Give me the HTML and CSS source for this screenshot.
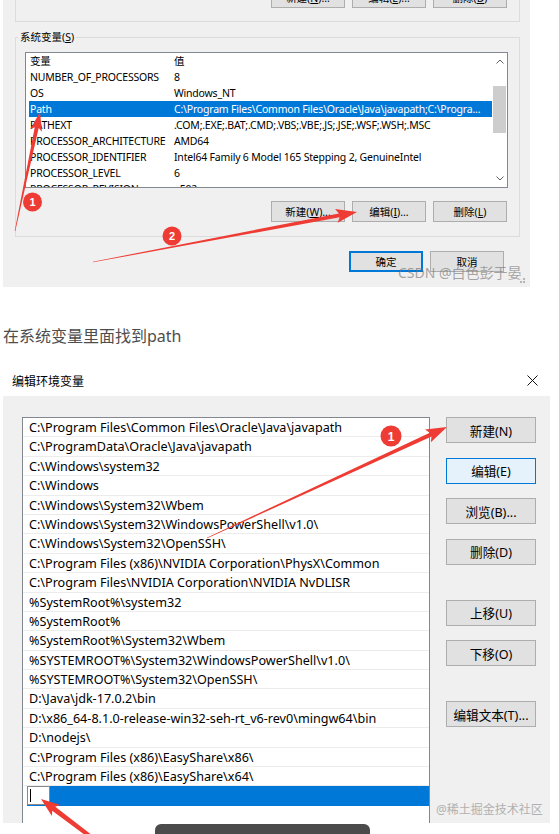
FILE: index.html
```html
<!DOCTYPE html>
<html lang="zh-CN">
<head>
    <meta charset="UTF-8">
    <meta name="viewport" content="width=device-width, initial-scale=1.0">
    <title>在系统变量里面找到path</title>
    <link rel="stylesheet" href="styles.css">
</head>
<body>
<div class="page">
    <!-- screenshot 1: system variables -->
    <section class="shot shot-sys">
        <div class="user-group">
            <div class="btn-row">
                <span class="btn">新建(<u>N</u>)...</span>
                <span class="btn">编辑(<u>E</u>)...</span>
                <span class="btn">删除(<u>D</u>)</span>
            </div>
        </div>
        <fieldset class="sys-group">
            <legend>系统变量(<u>S</u>)</legend>
            <div class="listview">
                <div class="lv-body">
                    <div class="lv-row"><span>变量</span><span>值</span></div>
                    <div class="lv-row"><span>NUMBER_OF_PROCESSORS</span><span>8</span></div>
                    <div class="lv-row"><span>OS</span><span>Windows_NT</span></div>
                    <div class="lv-row sel"><span>Path</span><span>C:\Program Files\Common Files\Oracle\Java\javapath;C:\Progra...</span></div>
                    <div class="lv-row"><span>PATHEXT</span><span>.COM;.EXE;.BAT;.CMD;.VBS;.VBE;.JS;.JSE;.WSF;.WSH;.MSC</span></div>
                    <div class="lv-row"><span>PROCESSOR_ARCHITECTURE</span><span>AMD64</span></div>
                    <div class="lv-row"><span>PROCESSOR_IDENTIFIER</span><span>Intel64 Family 6 Model 165 Stepping 2, GenuineIntel</span></div>
                    <div class="lv-row"><span>PROCESSOR_LEVEL</span><span>6</span></div>
                    <div class="lv-row"><span>PROCESSOR_REVISION</span><span>a502</span></div>
                </div>
                <div class="vscroll">
                    <div class="sb-arrow"><svg width="8" height="5" viewBox="0 0 8 5"><polyline points="0.5,4.5 4,1 7.5,4.5" fill="none" stroke="#606060" stroke-width="1"/></svg></div>
                    <div class="sb-track"><div class="sb-thumb"></div></div>
                    <div class="sb-arrow"><svg width="8" height="5" viewBox="0 0 8 5"><polyline points="0.5,0.5 4,4 7.5,0.5" fill="none" stroke="#606060" stroke-width="1"/></svg></div>
                </div>
            </div>
            <div class="btn-row group-btns">
                <span class="btn">新建(<u>W</u>)...</span>
                <span class="btn">编辑(<u>I</u>)...</span>
                <span class="btn">删除(<u>L</u>)</span>
            </div>
        </fieldset>
        <div class="btn-row dlg-foot">
            <span class="btn btn-default">确定</span>
            <span class="btn">取消</span>
        </div>
    </section>

    <p class="caption">在系统变量里面找到path</p>

    <!-- screenshot 2: edit environment variable -->
    <section class="shot shot-edit">
        <div class="titlebar">
            <span>编辑环境变量</span>
            <svg width="11" height="11" viewBox="0 0 11 11"><path d="M0.5 0.5 L10.5 10.5 M10.5 0.5 L0.5 10.5" stroke="#111" stroke-width="1"/></svg>
        </div>
        <div class="edit-body">
            <div class="pathlist">
                <div class="path-row">C:\Program Files\Common Files\Oracle\Java\javapath</div>
                <div class="path-row">C:\ProgramData\Oracle\Java\javapath</div>
                <div class="path-row">C:\Windows\system32</div>
                <div class="path-row">C:\Windows</div>
                <div class="path-row">C:\Windows\System32\Wbem</div>
                <div class="path-row">C:\Windows\System32\WindowsPowerShell\v1.0\</div>
                <div class="path-row">C:\Windows\System32\OpenSSH\</div>
                <div class="path-row">C:\Program Files (x86)\NVIDIA Corporation\PhysX\Common</div>
                <div class="path-row">C:\Program Files\NVIDIA Corporation\NVIDIA NvDLISR</div>
                <div class="path-row">%SystemRoot%\system32</div>
                <div class="path-row">%SystemRoot%</div>
                <div class="path-row">%SystemRoot%\System32\Wbem</div>
                <div class="path-row">%SYSTEMROOT%\System32\WindowsPowerShell\v1.0\</div>
                <div class="path-row">%SYSTEMROOT%\System32\OpenSSH\</div>
                <div class="path-row">D:\Java\jdk-17.0.2\bin</div>
                <div class="path-row">D:\x86_64-8.1.0-release-win32-seh-rt_v6-rev0\mingw64\bin</div>
                <div class="path-row">D:\nodejs\</div>
                <div class="path-row">C:\Program Files (x86)\EasyShare\x86\</div>
                <div class="path-row">C:\Program Files (x86)\EasyShare\x64\</div>
                <div class="path-row sel"><span class="edit-cell"><span class="caret"></span></span></div>
                <div class="path-row"></div>
            </div>
            <div class="side-btns">
                <span class="side-btn">新建(N)</span>
                <span class="side-btn focus">编辑(E)</span>
                <span class="side-btn">浏览(B)...</span>
                <span class="side-btn">删除(D)</span>
                <span class="side-btn gap-lg">上移(U)</span>
                <span class="side-btn">下移(O)</span>
                <span class="side-btn gap-lg">编辑文本(T)...</span>
            </div>
        </div>
    </section>

    <!-- annotations drawn on top of the screenshots -->
    <svg class="marks" width="559" height="834" viewBox="0 0 559 834">
        <g fill="#ee3b33">
            <polygon points="14.7,230.9 34.75,127.25 30.22,129.37 40,112 41.96,131.83 38.67,128.07 15.3,231.1"/>
            <polygon points="92.94,261.71 338.94,213.38 335.07,209.03 357,212 337.67,222.79 339.68,217.32 93.06,262.29"/>
            <polygon points="206.83,537.64 429.82,432.74 425,429.47 447,427 430.88,442.17 431.5,436.38 207.17,538.36"/>
            <polygon points="96.21,838.41 55.25,806.69 60.36,804.91 41,799 51.9,816.07 52.23,810.67 93.79,841.59"/>
            <circle cx="32.5" cy="202" r="9.5"/>
            <circle cx="172" cy="236" r="9.5"/>
            <circle cx="391" cy="436" r="10.5"/>
        </g>
        <g fill="#fff" font-family="Liberation Sans, sans-serif" font-weight="bold" text-anchor="middle">
            <text x="32.5" y="206" font-size="11">1</text>
            <text x="172" y="240" font-size="11">2</text>
            <text x="391" y="440.5" font-size="12">1</text>
        </g>
        <g fill="#b5b5b5">
            <rect x="523" y="278" width="2" height="2"/>
            <rect x="520" y="281" width="2" height="2"/>
            <rect x="523" y="281" width="2" height="2"/>
        </g>
    </svg>
    <div class="wm wm-csdn">CSDN @白色彭于晏</div>
    <div class="wm wm-juejin">@稀土掘金技术社区</div>
    <div class="toast-bar"></div>
</div>
</body>
</html>
```

FILE: styles.css
```css
body {
    margin: 0;
    background-color: #fff;
    font-family: "Noto Sans", "Noto Sans CJK SC", sans-serif;
    color: #000;
}

.page {
    position: relative;
    width: 559px;
    height: 834px;
    overflow: hidden;
}

.shot {
    margin-left: 3px;
    background-color: #f0f0f0;
    overflow: hidden;
}

/* ---- first screenshot ---- */

.shot-sys {
    width: 527px;
    height: 287px;
    font-size: 10.5px;
}

.user-group {
    height: 22px;
    margin: 0 10px 0 12px;
    padding-right: 12px;
    border: 1px solid #dcdcdc;
    border-top: none;
    box-sizing: border-box;
    display: flex;
    justify-content: flex-end;
    align-items: flex-end;
}

.user-group .btn-row {
    margin-bottom: 13px;
}

.btn-row {
    display: flex;
    justify-content: flex-end;
    gap: 7px;
}

.btn {
    display: flex;
    align-items: center;
    justify-content: center;
    width: 74px;
    height: 21px;
    box-sizing: border-box;
    background-color: #e1e1e1;
    border: 1px solid #adadad;
    white-space: nowrap;
}

.btn u {
    text-decoration-thickness: 1px;
    text-underline-offset: 1px;
}

.btn-default {
    border-color: #0078d7;
    box-shadow: inset 0 0 0 1px #0078d7;
}

.sys-group {
    margin: 8px 10px 0 12px;
    padding: 8px 11px 14px 9px;
    border: 1px solid #dcdcdc;
    min-width: 0;
}

.sys-group legend {
    margin-left: -7px;
    padding: 0 2px;
    line-height: 14px;
}

.listview {
    display: flex;
    height: 136px;
    box-sizing: border-box;
    border: 1px solid #828790;
    background-color: #fff;
}

.lv-body {
    flex: 1;
    padding-left: 3px;
    overflow: hidden;
}

.lv-row {
    display: grid;
    grid-template-columns: 144px 1fr;
    height: 16px;
    line-height: 16px;
    padding-left: 1px;
    letter-spacing: -0.2px;
    white-space: nowrap;
    overflow: hidden;
}

.lv-row.sel {
    background-color: #0078d7;
    color: #fff;
}

.vscroll {
    width: 15px;
    display: flex;
    flex-direction: column;
}

.sb-arrow {
    height: 17px;
    display: flex;
    align-items: center;
    justify-content: center;
}

.sb-track {
    flex: 1;
}

.sb-thumb {
    margin: 16px 1px 0 1px;
    height: 47px;
    background-color: #cdcdcd;
}

.group-btns {
    margin-top: 13px;
    padding-right: 1px;
}

.dlg-foot {
    margin-top: 14px;
    padding-right: 26px;
}

.caption {
    margin: 39px 0 0 3px;
    font-size: 16px;
    line-height: 20px;
    color: #4d4d4d;
}

/* ---- second screenshot ---- */

.shot-edit {
    margin-top: 19px;
    width: 547px;
    height: 458px;
}

.titlebar {
    height: 31px;
    background-color: #fff;
    display: flex;
    align-items: center;
    justify-content: space-between;
    padding: 0 12px 0 9px;
    font-size: 12px;
}

.edit-body {
    display: flex;
    align-items: flex-start;
    padding: 21px 0 0 19px;
}

.pathlist {
    width: 408px;
    height: 440px;
    box-sizing: border-box;
    border: 1px solid #828790;
    background-color: #fff;
    font-size: 12.6px;
}

.path-row {
    height: 19.4px;
    line-height: 19px;
    box-sizing: border-box;
    padding-left: 6px;
    border-bottom: 1px solid #ececec;
    white-space: nowrap;
    overflow: hidden;
}

.path-row.sel {
    display: flex;
    margin-left: 4px;
    padding-left: 0;
    background-color: #0078d7;
    border-bottom-color: #0078d7;
}

.edit-cell {
    width: 23px;
    box-sizing: border-box;
    background-color: #fff;
    border: 1px solid #8a8a8a;
    display: flex;
    align-items: center;
    padding-left: 2px;
}

.caret {
    width: 1px;
    height: 13px;
    background-color: #000;
}

.side-btns {
    margin-left: 16px;
    width: 90px;
    display: flex;
    flex-direction: column;
}

.side-btn {
    display: flex;
    align-items: center;
    justify-content: center;
    height: 26px;
    box-sizing: border-box;
    background-color: #e1e1e1;
    border: 1px solid #adadad;
    font-size: 12.6px;
    white-space: nowrap;
}

.side-btn + .side-btn {
    margin-top: 14.5px;
}

.side-btn.gap-lg {
    margin-top: 35px;
}

.side-btn.focus {
    background-color: #e5f1fb;
    border-color: #0078d7;
}

/* ---- overlays ---- */

.marks {
    position: absolute;
    left: 0;
    top: 0;
    pointer-events: none;
}

.wm {
    position: absolute;
    white-space: nowrap;
}

.wm-csdn {
    left: 398px;
    top: 265px;
    font-size: 14px;
    line-height: 16px;
    color: rgba(110, 110, 110, 0.6);
}

.wm-juejin {
    left: 436px;
    top: 802px;
    font-size: 12px;
    line-height: 16px;
    color: #b0b0b0;
}

.toast-bar {
    position: absolute;
    left: 155px;
    top: 824px;
    width: 215px;
    height: 14px;
    background-color: #4b4b4b;
    border-radius: 6px 6px 0 0;
}
```
